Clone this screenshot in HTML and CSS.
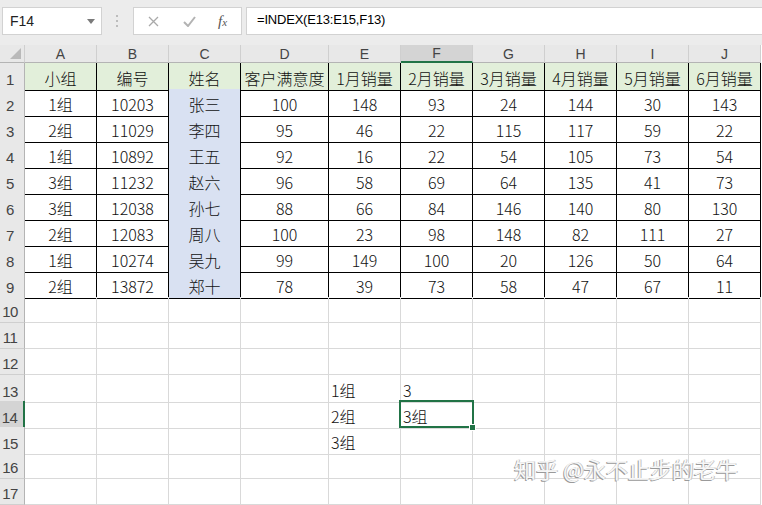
FILE: index.html
```html
<!DOCTYPE html>
<html lang="zh-CN">
<head>
    <meta charset="UTF-8">
    <title>INDEX</title>
    <link rel="stylesheet" href="styles.css">
</head>
<body>
    <div class="topbar">
        <div class="namebox">
            <span>F14</span>
            <svg class="arrow" width="8" height="5" viewBox="0 0 8 5"><path d="M0 0H8L4 5Z" fill="#7a7a7a"/></svg>
        </div>
        <div class="grip">
            <svg width="3" height="12" viewBox="0 0 3 12"><rect x="0" y="0" width="2" height="2" fill="#bcbcbc"/><rect x="0" y="5" width="2" height="2" fill="#bcbcbc"/><rect x="0" y="10" width="2" height="2" fill="#bcbcbc"/></svg>
        </div>
        <div class="fxbox">
            <svg class="cancel" width="11" height="11" viewBox="0 0 11 11"><path d="M1 1L10 10M10 1L1 10" stroke="#a9a9a9" stroke-width="1.3"/></svg>
            <svg class="enter" width="13" height="11" viewBox="0 0 13 11"><path d="M1 6L5 10L12 1" stroke="#b3b3b3" stroke-width="2" fill="none"/></svg>
            <span class="fx">f<i>x</i></span>
        </div>
        <div class="formula">=INDEX(E13:E15,F13)</div>
    </div>

    <div class="sheet">
        <div class="row head">
            <div class="corner"><span class="tri"></span></div>
            <div>A</div><div>B</div><div>C</div><div>D</div><div>E</div>
            <div class="on">F</div><div>G</div><div>H</div><div>I</div><div>J</div>
        </div>
        <div class="row data title">
            <div class="rh">1</div><div>小组</div><div>编号</div><div>姓名</div><div>客户满意度</div><div>1月销量</div><div>2月销量</div><div>3月销量</div><div>4月销量</div><div>5月销量</div><div>6月销量</div>
        </div>
        <div class="row data">
            <div class="rh">2</div><div>1组</div><div>10203</div><div class="name">张三</div><div>100</div><div>148</div><div>93</div><div>24</div><div>144</div><div>30</div><div>143</div>
        </div>
        <div class="row data">
            <div class="rh">3</div><div>2组</div><div>11029</div><div class="name">李四</div><div>95</div><div>46</div><div>22</div><div>115</div><div>117</div><div>59</div><div>22</div>
        </div>
        <div class="row data">
            <div class="rh">4</div><div>1组</div><div>10892</div><div class="name">王五</div><div>92</div><div>16</div><div>22</div><div>54</div><div>105</div><div>73</div><div>54</div>
        </div>
        <div class="row data">
            <div class="rh">5</div><div>3组</div><div>11232</div><div class="name">赵六</div><div>96</div><div>58</div><div>69</div><div>64</div><div>135</div><div>41</div><div>73</div>
        </div>
        <div class="row data">
            <div class="rh">6</div><div>3组</div><div>12038</div><div class="name">孙七</div><div>88</div><div>66</div><div>84</div><div>146</div><div>140</div><div>80</div><div>130</div>
        </div>
        <div class="row data">
            <div class="rh">7</div><div>2组</div><div>12083</div><div class="name">周八</div><div>100</div><div>23</div><div>98</div><div>148</div><div>82</div><div>111</div><div>27</div>
        </div>
        <div class="row data">
            <div class="rh">8</div><div>1组</div><div>10274</div><div class="name">吴九</div><div>99</div><div>149</div><div>100</div><div>20</div><div>126</div><div>50</div><div>64</div>
        </div>
        <div class="row data">
            <div class="rh">9</div><div>2组</div><div>13872</div><div class="name">郑十</div><div>78</div><div>39</div><div>73</div><div>58</div><div>47</div><div>67</div><div>11</div>
        </div>
        <div class="row">
            <div class="rh">10</div><div></div><div></div><div></div><div></div><div></div><div></div><div></div><div></div><div></div><div></div>
        </div>
        <div class="row">
            <div class="rh">11</div><div></div><div></div><div></div><div></div><div></div><div></div><div></div><div></div><div></div><div></div>
        </div>
        <div class="row">
            <div class="rh">12</div><div></div><div></div><div></div><div></div><div></div><div></div><div></div><div></div><div></div><div></div>
        </div>
        <div class="row">
            <div class="rh">13</div><div></div><div></div><div></div><div></div><div class="l">1组</div><div class="l">3</div><div></div><div></div><div></div><div></div>
        </div>
        <div class="row">
            <div class="rh on">14</div><div></div><div></div><div></div><div></div><div class="l">2组</div><div class="l sel">3组<span class="handle"></span></div><div></div><div></div><div></div><div></div>
        </div>
        <div class="row">
            <div class="rh">15</div><div></div><div></div><div></div><div></div><div class="l">3组</div><div></div><div></div><div></div><div></div><div></div>
        </div>
        <div class="row">
            <div class="rh">16</div><div></div><div></div><div></div><div></div><div></div><div></div><div></div><div></div><div></div><div></div>
        </div>
        <div class="row">
            <div class="rh">17</div><div></div><div></div><div></div><div></div><div></div><div></div><div></div><div></div><div></div><div></div>
        </div>

        <div class="watermark">知乎 @永不止步的老牛</div>
    </div>
</body>
</html>
```

FILE: styles.css
```css
body {
    margin: 0;
    padding: 0;
    width: 762px;
    height: 505px;
    overflow: hidden;
    background-color: #fff;
    font-family: "Noto Sans CJK SC", sans-serif;
    color: #000;
}
.topbar {
    display: flex;
    align-items: center;
    height: 45px;
    box-sizing: border-box;
    padding: 7px 0 10px 2px;
    background-color: #ececec;
}
.namebox {
    display: flex;
    align-items: center;
    justify-content: space-between;
    width: 100px;
    height: 28px;
    box-sizing: border-box;
    padding: 0 6px 0 7px;
    background-color: #fff;
    border: 1px solid #d2d2d2;
    font-family: "Liberation Sans", sans-serif;
    font-size: 14px;
    color: #222;
}
.grip {
    display: flex;
    align-items: center;
    justify-content: center;
    width: 31px;
    height: 28px;
}
.fxbox {
    display: flex;
    align-items: center;
    width: 109px;
    height: 28px;
    box-sizing: border-box;
    padding-left: 14px;
    background-color: #fff;
    border: 1px solid #d2d2d2;
}
.fxbox .cancel {
    margin-right: 24px;
}
.fxbox .enter {
    margin-right: 22px;
}
.fx {
    font-family: "Liberation Serif", serif;
    font-style: italic;
    font-size: 15px;
    color: #555;
}
.fx i {
    font-size: 11px;
}
.formula {
    flex: 1;
    height: 28px;
    box-sizing: border-box;
    margin-left: 4px;
    padding: 4px 0 0 10px;
    background-color: #fff;
    border: 1px solid #d2d2d2;
    border-right: none;
    font-family: "Liberation Sans", sans-serif;
    font-size: 13px;
    letter-spacing: -0.2px;
}
.sheet {
    position: relative;
}
.row {
    display: grid;
    grid-template-columns: 25px 72px 72px 72px 88px repeat(6, 72px);
    height: 26px;
}
.row > div {
    box-sizing: border-box;
    display: flex;
    align-items: center;
    justify-content: center;
    padding-top: 3px;
    border-right: 1px solid #d9d9d9;
    border-bottom: 1px solid #d9d9d9;
    font-size: 16px;
    font-weight: 300;
    color: #111;
    white-space: nowrap;
}
.row.head {
    height: 18px;
}
.row.head > div {
    padding-top: 0;
    background-color: #e8e8e8;
    border-right-color: #cfcfcf;
    border-bottom-color: #b4b4b4;
    font-family: "Liberation Sans", sans-serif;
    font-size: 14px;
    color: #444;
}
.row.head > div.on {
    background-color: #d4d4d4;
    border-bottom: 2px solid #217346;
}
.corner {
    position: relative;
}
.tri {
    position: absolute;
    right: 3px;
    bottom: 3px;
    width: 0;
    height: 0;
    border-left: 11px solid transparent;
    border-bottom: 11px solid #b9b9b9;
}
.row > .rh {
    align-items: flex-end;
    padding: 0 4px 2px 0;
    background-color: #e8e8e8;
    border-right-color: #b4b4b4;
    border-bottom-color: #cfcfcf;
    font-family: "Liberation Sans", sans-serif;
    font-size: 15px;
    letter-spacing: -0.5px;
    color: #444;
}
.row > .rh.on {
    background-color: #d4d4d4;
    border-right: 2px solid #217346;
}
.row.data > div:not(.rh) {
    border-right-color: #000;
    border-bottom-color: #000;
}
.row.title > div:not(.rh) {
    background-color: #e2efda;
}
.row > .name {
    background-color: #d9e1f2;
}
.row > .l {
    justify-content: flex-start;
    padding-left: 2px;
}
.sel {
    position: relative;
}
.sel::after {
    content: "";
    position: absolute;
    left: -2px;
    top: -1px;
    width: 75px;
    height: 28px;
    box-sizing: border-box;
    border: 2px solid #217346;
}
.handle {
    position: absolute;
    left: 68px;
    top: 23px;
    width: 7px;
    height: 7px;
    box-sizing: border-box;
    background-color: #217346;
    border: 1px solid #fff;
    z-index: 1;
}
.watermark {
    position: absolute;
    left: 514px;
    top: 407px;
    font-size: 22px;
    color: #f7f7f7;
    text-shadow: -1px 1px 0 #9a9a9a, 1px 0 0 #c4c4c4;
    white-space: nowrap;
}
```
